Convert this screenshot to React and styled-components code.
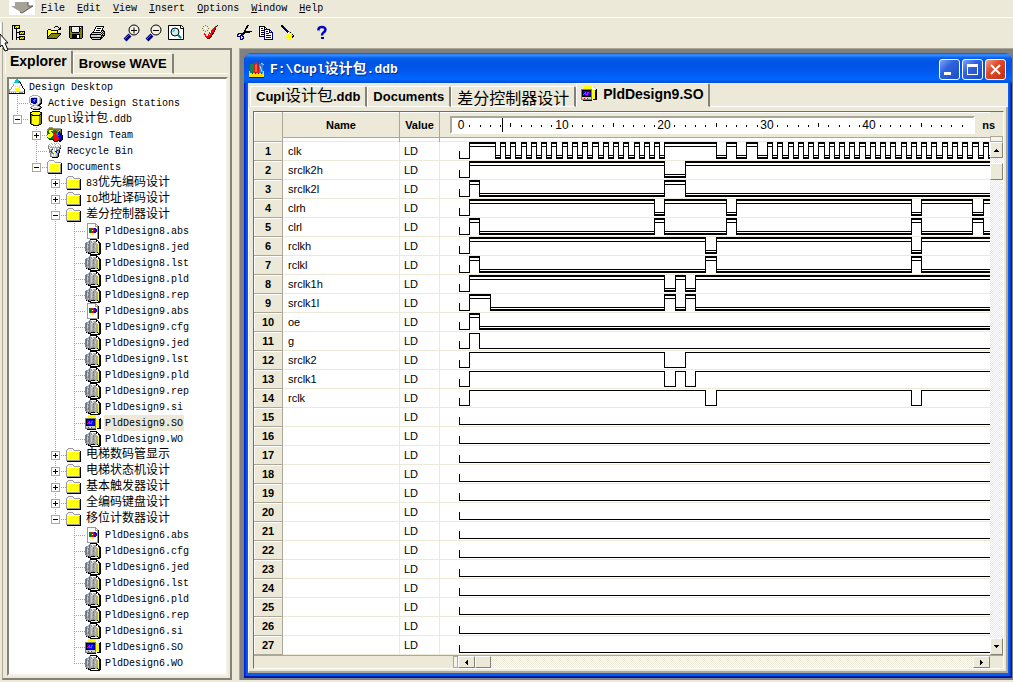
import React, { useState } from "react";
import styled, { createGlobalStyle, css } from "styled-components";

const GlobalStyle = createGlobalStyle`
  * {
    box-sizing: border-box;
  }
  body {
    margin: 0;
    background: #ece9d8;
    color: #000;
    font-family: "Liberation Mono", "Noto Sans CJK SC", monospace;
    font-size: 10px;
  }
  button {
    padding: 0;
    border: none;
    background: none;
    color: inherit;
    font: inherit;
  }
`;

/* ---------- icons ---------- */

const COLORS = {
  K: "#000000",
  W: "#ffffff",
  A: "#999999",
  G: "#a8a8a8",
  g: "#7c7c7c",
  L: "#cccccc",
  B: "#4d86c4",
  b: "#0000ff",
  D: "#000080",
  N: "#5f9e36",
  T: "#2f7f86",
  Y: "#ffff00",
  y: "#808000",
  R: "#ff0000",
  r: "#800000",
  M: "#ff00ff",
  C: "#00cccc",
  E: "#008000",
};

const Pixels = ({ rows }) => (
  <svg
    width={rows[0].length}
    height={rows.length}
    shapeRendering="crispEdges"
    aria-hidden="true"
  >
    {rows.map((row, y) =>
      row
        .split("")
        .map((c, x) =>
          c === "." ? null : (
            <rect key={x + "-" + y} x={x} y={y} width="1" height="1" fill={COLORS[c]} />
          )
        )
    )}
  </svg>
);

const ICONS = {
  folder: [
    "................",
    "..AAAAA.........",
    ".AYWYWYA........",
    "AYWYWYWYAAAAAA..",
    "AWWWWWWWWWWWWWK.",
    "AWYWYWYWYWYWYAK.",
    "AYWYWYWYWYWYWAK.",
    "AWYWYWYWYWYWYAK.",
    "AYWYWYWYWYWYWAK.",
    "AWYWYWYWYWYWYAK.",
    "AYWYWYWYWYWYWAK.",
    "AWYWYWYWYWYWYAK.",
    "AYWYWYWYWYWYWAK.",
    "AAAAAAAAAAAAAAK.",
    ".KKKKKKKKKKKKKK.",
    "................",
  ],
  openFolder: [
    "................",
    "..AAAAA.........",
    ".AWWWWWA........",
    "AWWWWWWWAAAAAA..",
    "AWWWWWWWWWWWWWK.",
    "AWWYWYWYWYWYWAK.",
    "AWYWWWYWWWYWWAK.",
    "AWWYWYWYWYWYWAK.",
    "AWYWWWYWWWYWWAK.",
    "AWWYWYWYWYWYWAK.",
    "AWYWWWYWWWYWWAK.",
    "AWWYWYWYWYWYWAK.",
    "AYWYWYWYWYWYWAK.",
    "AAAAAAAAAAAAAAK.",
    ".KKKKKKKKKKKKKK.",
    "................",
  ],
  doc: [
    ".....KKKKKKK....",
    "....GGWWWWWKK...",
    "...GTGGWGGGKWK..",
    ".BGGTGGLLGGWWKK.",
    "BgGLNGLLgGGGWYKK",
    "BgGgNGLGgGGGGYKK",
    "BgLgNGLGGGLGGYKK",
    "BBLGNGLGgGLGGYKK",
    "BgLgNGLGgGLGGYKK",
    "BgGgNGLGGGGGGYKK",
    "BBGgNGLGgGLGGYKK",
    "BgGGNGGGGGGGGYKK",
    ".BGGNGGGgGGGGYKK",
    ".KGKNgKKKKGGKYKK",
    "...KKKWWWWWWWKKK",
    ".....KKKKKKKKKK.",
  ],
  abs: [
    "..AAAAAAAAA.....",
    "..AWWWWWWWAA....",
    "..AWWWWWWWAWA...",
    "..AWWWWWWWAAAK..",
    "..AWWWWWWWWWAK..",
    "..AWEERRRbbWAK..",
    "..AWEEERRbbbAK..",
    "..AWEERWRRbbAK..",
    "..AWEEERRbbbAK..",
    "..AWEERRRbbWAK..",
    "..AWWYYYYYWWAK..",
    "..AWWWYYYWWWAK..",
    "..AWWWWWWWWWAK..",
    "..AWWWWWWWWWAK..",
    "..AWWWWWWWWWAK..",
    "..AAAAAAAAAAAK..",
  ],
  wave: [
    "...YYYYYYYYWL...",
    "...YYYYYYYYWWL..",
    "...YYYYYYYYWWWL.",
    "gggggggggggWWWWK",
    "gKKKKKKKKKgYYYKK",
    "gKbbbbbbbDgYYYKK",
    "gKbbMbMMbDgYYYKK",
    "gKbMMbMbbDgYYYKK",
    "gKMbMMMbbDgYYYKK",
    "gKbbbbbbbDgYYYKK",
    "gKKKKKKKKKgYYYKK",
    "gLLLLLLLLLgYYYKK",
    "gLLRLWRLLLgYYYKK",
    "ggggggggggg.KKKK",
    "..KKKKKKKKK.....",
    "................",
  ],
  desktop: [
    ".......CC.......",
    "......CCCC......",
    "......CCCCK.....",
    ".....CCCCTTK....",
    ".....WWWWWWK....",
    "....AWWWWWWWK...",
    "....AWWWWWWLK...",
    "...AWWLWLWLWWK..",
    "..AWWWWWWWLWWK..",
    "..AWWWYYYYWWWWK.",
    "AAWWWWYYYYYWWWWK",
    "AWWWWWWYYYYWWWWK",
    "ALLLLLLLLLLLLLLK",
    "AWAWAWAWWWAAAAWK",
    "KKKKKKKKKKKKKKKK",
    "................",
  ],
  station: [
    "....GGGGGG......",
    "..GGWWWWWWGG....",
    ".GWWLLLLLWWLg...",
    ".GWDDDDDDLWLgg..",
    ".GLDbbBBDLWLgK..",
    ".GLDbBBbDLWLgK..",
    ".GLDbbBbDLWLgK..",
    ".GWDDbbDDLWLgK..",
    "..GWLDDDLLWgKK..",
    "..GGWLLLLLgKK...",
    "....GgLLLgKK....",
    "...gLLWWWLLgK...",
    "..gLWWLLLWWLgK..",
    "...KgLLLLLgKK...",
    ".....KKKKKKK....",
    "................",
  ],
  db: [
    "....KKKKKKKK....",
    "..KKYYYYYYYYKK..",
    "..KYYYYYYYYYyK..",
    "..KKyYYYYYYyKK..",
    "..KyKKKKKKKKyK..",
    "..KyYWYYYYYyyK..",
    "..KyYWYYYYYyyK..",
    "..KyYWYYYYYyyK..",
    "..KyYWYYYYYyyK..",
    "..KyYWYYYYYyyK..",
    "..KyYWYYYYYyyK..",
    "..KyYWYYYYYyyK..",
    "..KyYWYYYYYyyK..",
    "...KKyYYYYyKK...",
    ".....KKKKKK.....",
    "................",
  ],
  team: [
    "..AAAA..........",
    ".AyyyyAAAAAAAA..",
    "AyyyyyyyyyyyyyK.",
    "AyLYYLyEEyyyLyK.",
    "EEYYEyRRREyLbyK.",
    "EEYYYERRREybbyK.",
    "yEEYYYERREybbbK.",
    "EYYYYYyRRyybbDK.",
    "YYYYYYEERRRybbbK",
    "YYYYYEERRRRbbbbK",
    "EYYYEERRRRRRbbbK",
    ".EEEEERRRRRRbbDK",
    "..KKKKrRRRRrbDDK",
    "......KRRRrKKDD.",
    ".......KKKK.KK..",
    "................",
  ],
  bin: [
    "....GWWG.GWG....",
    "..GWWGWWGWWWG...",
    ".GWLWWWLWWLWWg..",
    ".gGWGWLWGWWGWg..",
    ".gWGGGGGGGGGgg..",
    ".gLWWGWLWGLWgK..",
    "..gLBbWLWBLgg...",
    "..gLRWWLWBbgK...",
    "..gRRLWLbbLgK...",
    "..gLRBWYYbLgK...",
    "...gLBBYYLgK....",
    "...gLWLWLLgK....",
    "...gLWLWLLgK....",
    "...ggLLLLggK....",
    ".....KKKKKK.....",
    "................",
  ],
  hierarchy: [
    "KKKKKKKK........",
    "K.KyYYYK........",
    "K.KYyYyK........",
    "K.KKKKKK........",
    "K...K...........",
    "K...K...........",
    "K...K..KKKKKK...",
    "K...KKKKyYyYK...",
    "K...K..KYyYyK...",
    "K...K..KKKKKK...",
    "K...K...........",
    "K...K..KKKKKK...",
    "K...KKKKyYyYK...",
    "K...K..KYyYyK...",
    "K...K..KKKKKK...",
    "................",
  ],
  open: [
    "................",
    ".........KKK....",
    "........K...K.K.",
    ".............KK.",
    "..KKK.......KKK.",
    ".KYWYKKKKKKK....",
    ".KWYWYWYWYWK....",
    ".KYWYWYWYWYK....",
    ".KWYWKKKKKKKKKK.",
    ".KYWKyyyyyyyyyK.",
    ".KWKyyyyyyyyyK..",
    ".KKyyyyyyyyyK...",
    ".KyyyyyyyyyK....",
    ".KKKKKKKKKK.....",
    "................",
    "................",
  ],
  save: [
    "................",
    ".KKKKKKKKKKKKKK.",
    ".KyKYWYWYWYKWyK.",
    ".KyKWYWYWYWKKyK.",
    ".KyKYWYWYWYKyyK.",
    ".KyKWYWYWYWKyyK.",
    ".KyKYWYWYWYKyyK.",
    ".KyyKKKKKKKyyyK.",
    ".KyyyyyyyyyyyyK.",
    ".KyyKKKKKKKKyyK.",
    ".KyyKKKKKWWKyyK.",
    ".KyyKKKKKWWKyyK.",
    ".KyyKKKKKWWKyyK.",
    "..KKKKKKKKKKKK..",
    "................",
    "................",
  ],
  print: [
    "................",
    "......KKKKKKKK..",
    ".....KWWWWWWWK..",
    ".....KWKKKKWK...",
    "....KWWWWWWWK...",
    "....KWKKKKWKKK..",
    "...KWWWWWWWKLKK.",
    "..KKKKKKKKKLKLK.",
    ".KLLLLLLLLLKLKK.",
    "KKKKKKKKKKKLKLK.",
    "KLLLLLLYYYLKKKK.",
    "KLLLLLLLLLLKLK..",
    "KKKKKKKKKKKKK...",
    ".KLLLLLLLLKK....",
    "..KKKKKKKKK.....",
    "................",
  ],
  copy: [
    "................",
    ".KKKKKK.........",
    ".KWWWWKK........",
    ".KWKKWKWK.......",
    ".KWWWWDDDDDD....",
    ".KWKKKDWWWWDD...",
    ".KWWWWDWDDWDWD..",
    ".KWKKKDWWWWDDDD.",
    ".KWWWWDWDDDWWWD.",
    ".KWKKKDWWWWWWWD.",
    ".KWWWWDWDDDDDWD.",
    ".KKKKKDWWWWWWWD.",
    "......DWDDDDDWD.",
    "......DWWWWWWWD.",
    "......DDDDDDDDD.",
    "................",
  ],
  cut: [
    "...........KK...",
    "..........KK....",
    "..........KK....",
    ".........KK.....",
    ".........K......",
    "........KK......",
    "........KKKKKKKK",
    ".......KKKKKKK..",
    "..DDDDKKK.......",
    ".DD..DDD........",
    ".D..DDD.........",
    ".DDDD.DD........",
    "....D..D........",
    "....D.DD........",
    "....DDD.........",
    "................",
  ],
  brush: [
    ".KK.............",
    ".KKK............",
    "..KDD...........",
    "...KDD..........",
    "....KDD.........",
    ".....KDD........",
    "......KDDL......",
    ".......KWLK.....",
    "........WYWL....",
    ".......YYWYWK...",
    ".......YWYWYLK..",
    "......YWYWYYKK..",
    "......YYWY..K...",
    ".......YYYY.....",
    "......YY.YY.....",
    "................",
  ],
  wand: [
    "...y...........K",
    ".y.Y.y.......RK.",
    "..YWY.......RR..",
    "yYWWWYy....RRr..",
    "..YWY.....RRRK..",
    ".y.Y.y...RRRr...",
    "...y....WRRRK...",
    ".......RWRRr....",
    "..R....RRRrK....",
    "..RR..RWRRK.....",
    "...R..RRRr......",
    "...RRRRRrK......",
    "....RRRRK.......",
    ".....rrK........",
    "................",
    "................",
  ],
};

const Magnifier = ({ plus }) => (
  <svg width="18" height="18" viewBox="0 0 18 18" aria-hidden="true">
    <path d="M2 16 L7 11" stroke="#000080" strokeWidth="4" />
    <path d="M2 15 L7 10" stroke="#4a6ce0" strokeWidth="1" />
    <circle cx="11" cy="6" r="5" fill="#f3f1e6" stroke="#000" strokeWidth="1" />
    <path d="M8 6.5h6" stroke="#000" />
    {plus && <path d="M11 3.5v6" stroke="#000" />}
  </svg>
);

const FitIcon = () => (
  <svg width="18" height="18" viewBox="0 0 18 18" aria-hidden="true">
    <path d="M1.5 1.5h13l2 2v12h-15z" fill="#fff" stroke="#000" />
    <path d="M13.5 1.5v3h3" fill="none" stroke="#000" />
    <circle cx="8" cy="8" r="4" fill="#cdeeee" stroke="#000" />
    <path d="M6 8a2 2 0 0 1 2-2" stroke="#00b0b0" fill="none" />
    <path d="M11 11l3 3" stroke="#008080" strokeWidth="2" />
  </svg>
);

const HelpIcon = () => (
  <svg width="12" height="16" viewBox="0 0 12 16" aria-hidden="true">
    <path
      d="M2.5 5.5V4Q3 2 6 2t3.5 2.5Q9.5 6 7.5 7.5Q6 8.5 6 10.5"
      fill="none"
      stroke="#0000c8"
      strokeWidth="2.5"
    />
    <rect x="5" y="12" width="3" height="2" fill="#0000c8" />
  </svg>
);

const AppArrow = () => (
  <svg width="26" height="15" viewBox="0 0 26 15" aria-hidden="true">
    <rect width="26" height="15" fill="#fff" />
    <path d="M6 2h13v4h5l-11 7L2 6h4z" fill="#a5a298" />
    <path d="M19 2v4h5l-11 7-2-1" fill="none" stroke="#5c5a52" />
  </svg>
);

const BooksIcon = () => (
  <svg width="16" height="16" viewBox="0 0 16 16" aria-hidden="true">
    <path d="M1 2h4v9H1z" fill="#0c8a50" />
    <path d="M5 1l4-1 2 11H5z" fill="#e01818" />
    <path d="M6 3l2-1v8H6z" fill="#ff6040" />
    <path d="M10 2l4-1v10h-4z" fill="#2c7fd8" />
    <path d="M11 4l2 6M12 1l3 2" stroke="#a9e4ff" />
    <path d="M0 9h1v2h13V9h1v6H0z" fill="#ffe000" />
    <path d="M3 11h1v1H3zM6 11h1v1H6zM9 11h1v1H9zM12 11h1v1h-1zM0 15h15v1H0z" fill="#302000" />
  </svg>
);

const Cursor = styled.svg`
  position: absolute;
  left: 0;
  top: 34px;
`;

/* ---------- text with Chinese runs a size larger than the Latin ---------- */

const Han = styled.span`
  font-family: "Noto Sans CJK SC", sans-serif;
  font-size: ${(p) => p.$size}px;
  font-weight: ${(p) => (p.$bold ? 700 : 400)};
  line-height: 0;
`;

const Mixed = ({ text, size = 12, bold = false }) =>
  text.split(/([\u4e00-\u9fff]+)/).map((part, i) =>
    i % 2 ? (
      <Han key={i} $size={size} $bold={bold}>
        {part}
      </Han>
    ) : (
      part
    )
  );

/* ---------- menu and toolbar ---------- */

const Page = styled.div`
  position: relative;
  display: flex;
  flex-direction: column;
  min-height: 100vh;
  overflow: hidden;
`;

const MenuBar = styled.nav`
  display: flex;
  align-items: flex-start;
  gap: 12px;
  height: 18px;
  padding-left: 9px;
  border-bottom: 1px solid #fff;
`;

const MenuLogo = styled.span`
  display: flex;
  margin-right: -6px;
`;

const MenuItem = styled.button`
  height: 17px;
  line-height: 18px;
`;

const ToolBar = styled.div`
  display: flex;
  align-items: center;
  gap: 12px;
  height: 30px;
`;

const Grip = styled.span`
  width: 3px;
  height: 22px;
  margin: 0 -6px 0 0;
  border-right: 1px solid #aca899;
  border-left: 1px solid #fff;
`;

const ToolGroup = styled.div`
  display: flex;
`;

const ToolButton = styled.button`
  display: flex;
  align-items: center;
  justify-content: center;
  width: 22px;
  height: 22px;
`;

const tools = [
  [["Project tree", <Pixels rows={ICONS.hierarchy} />]],
  [
    ["Open", <Pixels rows={ICONS.open} />],
    ["Save", <Pixels rows={ICONS.save} />],
    ["Print", <Pixels rows={ICONS.print} />],
  ],
  [
    ["Zoom in", <Magnifier plus />],
    ["Zoom out", <Magnifier />],
    ["Fit page", <FitIcon />],
  ],
  [["Wizard", <Pixels rows={ICONS.wand} />]],
  [
    ["Cut", <Pixels rows={ICONS.cut} />],
    ["Copy", <Pixels rows={ICONS.copy} />],
    ["Paste", <Pixels rows={ICONS.brush} />],
  ],
  [["Help", <HelpIcon />]],
];

const menus = ["File", "Edit", "View", "Insert", "Options", "Window", "Help"];

/* ---------- tabs ---------- */

const TabRow = styled.div`
  display: flex;
  align-items: flex-end;
  height: 24px;
  font-family: "Liberation Sans", "Noto Sans CJK SC", sans-serif;
`;

const TabFill = styled.span`
  flex: 1;
  border-bottom: 1px solid #fff;
`;

const Tab = styled.button`
  display: flex;
  align-items: center;
  justify-content: center;
  gap: 6px;
  height: 21px;
  padding: 0 5px;
  border-top: 1px solid #fff;
  border-left: 1px solid #fff;
  border-right: 2px solid #848278;
  border-bottom: 1px solid #fff;
  border-radius: 2px 2px 0 0;
  font-size: 13px;
  font-weight: 700;
  line-height: 18px;
  white-space: nowrap;

  ${(p) =>
    p.$active &&
    css`
      height: 24px;
      padding: 0 4px 3px;
      border-bottom-color: #ece9d8;
      font-size: 14px;
    `}
`;

/* ---------- explorer ---------- */

const Main = styled.main`
  display: flex;
  flex: 1;
  padding-bottom: 2px;
`;

const Side = styled.aside`
  flex: 0 0 230px;
  display: flex;
  flex-direction: column;
  margin: 0 7px 0 2px;
  padding: 0 2px 2px 2px;
  border: 2px solid #848278;
  border-left: 1px solid #aca899;
`;

const TreeBox = styled.div`
  flex: 1;
  margin: 3px 0 0 2px;
  border: 2px solid;
  border-color: #848278 #f4f2e8 #f4f2e8 #848278;
  background: #fff;
`;

const Tree = styled.ul`
  margin: 0;
  padding: 0;
  list-style: none;
`;

const Row = styled.li`
  display: flex;
  height: 16px;
`;

const vertical = (height) =>
  `repeating-linear-gradient(#a0a0a0 0 1px, transparent 1px 2px) 8px 0 / 1px ${height} no-repeat`;
const horizontal =
  "repeating-linear-gradient(90deg, #a0a0a0 0 1px, transparent 1px 2px) 8px 8px / 11px 1px no-repeat";

const guides = {
  none: "none",
  pass: vertical("100%"),
  tee: `${vertical("100%")}, ${horizontal}`,
  end: `${vertical("9px")}, ${horizontal}`,
};

const Guide = styled.span`
  flex: 0 0 19px;
  padding: 4px;
  background: ${(p) => guides[p.$kind]};
`;

const Expander = styled.button`
  display: block;
  width: 9px;
  height: 9px;
  border: 1px solid #aca899;
  background: linear-gradient(#000, #000) 1px 3px / 5px 1px no-repeat,
    ${(p) => (p.$open ? "" : "linear-gradient(#000, #000) 3px 1px / 1px 5px no-repeat,")}
    linear-gradient(#fff, #fff);
`;

const ItemIcon = styled.span`
  flex: 0 0 19px;
  height: 16px;
  line-height: 0;
`;

const ItemLabel = styled.span`
  height: 16px;
  padding: 0 1px;
  line-height: 18px;
  white-space: nowrap;
  background: ${(p) => (p.$selected ? "#ece9d8" : "none")};
`;

const files = (name, exts) =>
  exts.map((ext) => ({
    name: `${name}.${ext}`,
    icon: ext === "abs" ? "abs" : ext === "SO" ? "wave" : "doc",
  }));

const closedFolder = (name) => ({ name, icon: "folder", closed: true, children: [] });

const designTree = {
  name: "Design Desktop",
  icon: "desktop",
  children: [
    { name: "Active Design Stations", icon: "station" },
    {
      name: "Cupl设计包.ddb",
      icon: "db",
      children: [
        { name: "Design Team", icon: "team", closed: true, children: [] },
        { name: "Recycle Bin", icon: "bin" },
        {
          name: "Documents",
          icon: "openFolder",
          children: [
            closedFolder("83优先编码设计"),
            closedFolder("IO地址译码设计"),
            {
              name: "差分控制器设计",
              icon: "folder",
              children: [
                ...files("PldDesign8", ["abs", "jed", "lst", "pld", "rep"]),
                ...files("PldDesign9", ["abs", "cfg", "jed", "lst", "pld", "rep", "si", "SO", "WO"]),
              ],
            },
            closedFolder("电梯数码管显示"),
            closedFolder("电梯状态机设计"),
            closedFolder("基本触发器设计"),
            closedFolder("全编码键盘设计"),
            {
              name: "移位计数器设计",
              icon: "folder",
              children: files("PldDesign6", ["abs", "cfg", "jed", "lst", "pld", "rep", "si", "SO", "WO"]),
            },
          ],
        },
      ],
    },
  ],
};

const TreeNode = ({ node, trail = [], last = true, root = false }) => {
  const [open, setOpen] = useState(!node.closed);
  const below = root ? [] : [...trail, last ? "none" : "pass"];

  return (
    <>
      <Row>
        {trail.map((kind, i) => (
          <Guide key={i} $kind={kind} />
        ))}
        {!root && (
          <Guide $kind={last ? "end" : "tee"}>
            {node.children && (
              <Expander $open={open} aria-label={node.name} onClick={() => setOpen(!open)} />
            )}
          </Guide>
        )}
        <ItemIcon>
          <Pixels rows={ICONS[node.icon]} />
        </ItemIcon>
        <ItemLabel $selected={node.name === "PldDesign9.SO"}>
          <Mixed text={node.name} />
        </ItemLabel>
      </Row>
      {open &&
        (node.children || []).map((child, i) => (
          <TreeNode
            key={child.name}
            node={child}
            trail={below}
            last={i === node.children.length - 1}
          />
        ))}
    </>
  );
};

/* ---------- document window ---------- */

const Workspace = styled.section`
  flex: 1;
  min-width: 0;
  padding: 4px 1px 2px 4px;
  border-top: 1px solid #aca899;
  border-left: 1px solid #aca899;
  background: #808080;
`;

const Window = styled.div`
  display: flex;
  flex-direction: column;
  height: 100%;
  padding: 0 4px 5px;
  border-radius: 8px 8px 0 0;
  background: linear-gradient(90deg, #0019cf 0, #0a5cf0 3px, #0a5cf0 calc(100% - 3px), #00138c 100%);
  box-shadow: inset 0 -2px #0019a8;
`;

const TitleBar = styled.header`
  display: flex;
  align-items: center;
  gap: 2px;
  height: 30px;
  margin: 0 -4px;
  padding: 3px 6px 0 5px;
  border-radius: 8px 8px 0 0;
  background: linear-gradient(
    #0a4fd8 0,
    #3c92ff 2px,
    #0560ee 5px,
    #0054e3 9px,
    #0058ee 18px,
    #0066ff 26px,
    #0050d8 30px
  );
`;

const WindowTitle = styled.h1`
  flex: 1;
  margin: 0 0 0 3px;
  color: #fff;
  font-size: 13px;
  line-height: 20px;
  text-shadow: 1px 1px #0a2a80;
`;

const TitleButton = styled.button`
  display: flex;
  width: 21px;
  height: 21px;
  border: 1px solid #fff;
  border-radius: 3px;
  background: ${(p) =>
    p.$close
      ? "linear-gradient(135deg, #f0a088, #e0492a 40%, #c03010)"
      : "linear-gradient(135deg, #7fa4f4, #2f62dc 40%, #1c4cc4)"};
`;

const Client = styled.div`
  flex: 1;
  display: flex;
  flex-direction: column;
  padding-left: 2px;
  background: #ece9d8;
`;

const Pane = styled.div`
  flex: 1;
  margin-left: -2px;
  padding: 4px 2px 2px 4px;
  border-left: 1px solid #fff;
  border-right: 2px solid #aca899;
  border-bottom: 2px solid #aca899;
`;

const GridBox = styled.div`
  border: 1px solid;
  border-color: #716f64 #fff #fff #716f64;
`;

const GridBody = styled.div`
  display: flex;
`;

const Grid = styled.table`
  flex: 1;
  width: 100%;
  min-width: 0;
  table-layout: fixed;
  border-spacing: 0;
  font-family: "Liberation Sans", sans-serif;
  font-size: 11px;
`;

const HeadCell = styled.th`
  width: ${(p) => p.$width};
  height: 30px;
  padding: 0 0 4px;
  border-right: 1px solid #aca899;
  background: linear-gradient(
    #fff 0 1px,
    #ece9d8 1px 25px,
    #aca899 25px 26px,
    #fff 26px 29px,
    #ece9d8 29px
  );
  font-size: 11px;
  line-height: 25px;

  &:last-child {
    border-right: none;
  }
`;

const CornerCell = styled(HeadCell)`
  border-bottom: 1px solid #aca899;
  background: #ece9d8;
  box-shadow: inset 1px 1px #fff;
`;

const NumberCell = styled.th`
  height: 19px;
  padding: 0;
  border-right: 1px solid #aca899;
  border-bottom: 1px solid #aca899;
  background: #ece9d8;
  box-shadow: inset 1px 1px #fff;
  line-height: 18px;
`;

const Cell = styled.td`
  height: 19px;
  padding: 0 0 0 ${(p) => p.$pad || 0}px;
  border-right: 1px solid #ece9d8;
  border-bottom: 1px solid #ece9d8;
  background: #fff;
  line-height: 18px;

  &:last-child {
    border-right: none;
  }
`;

const RulerRow = styled.div`
  display: flex;
  align-items: center;
  height: 25px;
  padding-left: 10px;
`;

const RulerBox = styled.div`
  flex: 1;
  height: 18px;
  border: 2px solid;
  border-color: #aca899 #fff #fff #aca899;
  background: #fff;
  line-height: 0;
`;

/* reaches over the scroll bar column */
const Unit = styled.span`
  position: relative;
  z-index: 1;
  width: 15px;
  margin: 0 -5px 0 5px;
  text-align: right;
`;

const WaveSvg = styled.svg`
  display: block;
  width: 100%;
  height: ${(p) => p.$height}px;
`;

const NS = 10.26;

const Ruler = () => (
  <WaveSvg $height={14} shapeRendering="crispEdges">
    {Array.from({ length: 50 }, (_, n) => {
      const x = Math.round(7 + n * NS);
      if (n % 10 === 0) {
        return (
          <text key={n} x={n ? x : x + 2} y="11" textAnchor="middle" fontSize="12" fontWeight="400">
            {n}
          </text>
        );
      }
      return n % 5 === 0 ? (
        <rect key={n} x={x} y="5" width="1" height="4" />
      ) : (
        <rect key={n} x={x} y="7" width="1" height="2" />
      );
    })}
    <rect x="50" y="0" width="1" height="14" />
  </WaveSvg>
);

// edges are counted in half nanoseconds, the first one always rises
const toX = (t) => Math.round(29.2 + t * 5.135);
const END = 2400;

const Wave = ({ edges, bus }) => {
  const shapes = [<path key="stub" d={edges ? "M19 9h1v7h10v1H19z" : `M19 9h1v7h${END}v1H19z`} />];

  (edges || []).forEach((t, i) => {
    const high = i % 2 === 0;
    const x = toX(t);
    const w = (i + 1 < edges.length ? toX(edges[i + 1]) : END) - x + 1;
    const top = bus ? 0 : 1;
    shapes.push(<rect key={"e" + i} x={x} y={top} width="1" height={17 - top} />);
    if (bus) {
      shapes.push(<rect key={"a" + i} x={x} y={high ? 0 : 15} width={w} height="2" />);
      shapes.push(<rect key={"b" + i} x={x} y={high ? 4 : 13} width={w} height="1" />);
    } else {
      shapes.push(<rect key={"a" + i} x={x} y={high ? 1 : 16} width={w} height="1" />);
    }
  });

  return (
    <WaveSvg $height={18} shapeRendering="crispEdges">
      {shapes}
    </WaveSvg>
  );
};

const range = (from, to) => Array.from({ length: to - from + 1 }, (_, i) => from + i);

const signals = [
  { name: "clk", bus: true, edges: [0, ...range(5, 38), 48, 50, 52, 54, 56, ...range(58, 101)] },
  { name: "srclk2h", bus: true, edges: [0, 38, 42] },
  { name: "srclk2l", bus: true, edges: [0, 2, 38, 42] },
  { name: "clrh", bus: true, edges: [0, 36, 38, 50, 52, 86, 88, 98, 100] },
  { name: "clrl", bus: true, edges: [0, 2, 36, 38, 50, 52, 86, 88, 98, 100] },
  { name: "rclkh", bus: true, edges: [0, 46, 48, 86, 88] },
  { name: "rclkl", bus: true, edges: [0, 2, 46, 48, 86, 88] },
  { name: "srclk1h", bus: true, edges: [0, 38, 40, 42, 44] },
  { name: "srclk1l", bus: true, edges: [0, 4, 38, 40, 42, 44] },
  { name: "oe", bus: true, edges: [0, 2] },
  { name: "g", edges: [0, 2] },
  { name: "srclk2", edges: [0, 38, 42] },
  { name: "srclk1", edges: [0, 38, 40, 42, 44] },
  { name: "rclk", edges: [0, 46, 48, 86, 88] },
  ...range(15, 27).map(() => ({ name: "" })),
];

/* ---------- scroll bars ---------- */

const Track = styled.span`
  flex: ${(p) => p.$grow || "1"};
  background: repeating-conic-gradient(#ece9d8 0 25%, #fff 0 50%) 0 0 / 2px 2px;
`;

const VScroll = styled.div`
  flex: 0 0 13px;
  display: flex;
  flex-direction: column;
  padding-top: 24px;
  background: #ece9d8;
`;

const HScroll = styled.div`
  display: flex;
  height: 13px;
  border-top: 1px solid #aca899;
  background: #ece9d8;
`;

const Raised = styled.button`
  display: flex;
  align-items: center;
  justify-content: center;
  flex: 0 0 ${(p) => p.$size}px;
  border: 1px solid;
  border-color: #fff #848278 #848278 #fff;
  background: #ece9d8;
`;

const SplitHandle = styled.span`
  flex: 0 0 ${(p) => p.$size}px;
  border: 1px solid #aca899;
  background: #f6f4ea;
`;

const HSpace = styled.span`
  flex: 0 0 ${(p) => p.$size}px;
`;

const Arrow = ({ d }) => (
  <svg width="7" height="7" viewBox="0 0 7 7" shapeRendering="crispEdges" aria-hidden="true">
    <path d={d} />
  </svg>
);

const WaveGrid = () => (
  <GridBox>
    <GridBody>
      <Grid>
        <thead>
          <tr>
            <CornerCell $width="29px" />
            <HeadCell $width="117px">Name</HeadCell>
            <HeadCell $width="40px">Value</HeadCell>
            <HeadCell $width="auto">
              <RulerRow>
                <RulerBox>
                  <Ruler />
                </RulerBox>
                <Unit>ns</Unit>
              </RulerRow>
            </HeadCell>
          </tr>
        </thead>
        <tbody>
          {signals.map((signal, i) => (
            <tr key={i}>
              <NumberCell scope="row">{i + 1}</NumberCell>
              <Cell $pad={5}>{signal.name}</Cell>
              <Cell $pad={4}>LD</Cell>
              <Cell>
                <Wave edges={signal.edges} bus={signal.bus} />
              </Cell>
            </tr>
          ))}
        </tbody>
      </Grid>
      <VScroll>
        <SplitHandle $size={6} />
        <Raised $size={16} aria-label="Scroll up">
          <Arrow d="M3 2h1v1h1v1h1v1H1V4h1V3h1z" />
        </Raised>
        <Track $grow="0 0 5px" />
        <Raised $size={17} aria-label="Vertical position" />
        <Track />
        <Raised $size={17} aria-label="Scroll down">
          <Arrow d="M1 2h5v1H5v1H4v1H3V4H2V3H1z" />
        </Raised>
      </VScroll>
    </GridBody>
    <HScroll>
      <HSpace $size={199} />
      <SplitHandle $size={5} />
      <Raised $size={17} aria-label="Scroll left">
        <Arrow d="M2 3h1V2h1V1h1v5H4V5H3V4H2z" />
      </Raised>
      <Raised $size={16} aria-label="Horizontal position" />
      <Track />
      <Raised $size={17} aria-label="Scroll right">
        <Arrow d="M2 1h1v1h1v1h1v1H4v1H3v1H2z" />
      </Raised>
      <HSpace $size={13} />
    </HScroll>
  </GridBox>
);

const App = () => {
  return (
    <Page>
      <GlobalStyle />
      <MenuBar>
        <MenuLogo>
          <AppArrow />
        </MenuLogo>
        {menus.map((menu) => (
          <MenuItem key={menu}>
            <u>{menu[0]}</u>
            {menu.slice(1)}
          </MenuItem>
        ))}
      </MenuBar>
      <ToolBar>
        <Grip />
        {tools.map((group, i) => (
          <ToolGroup key={i}>
            {group.map(([label, icon]) => (
              <ToolButton key={label} aria-label={label}>
                {icon}
              </ToolButton>
            ))}
          </ToolGroup>
        ))}
      </ToolBar>
      <Main>
        <Side>
          <TabRow>
            <Tab $active>Explorer</Tab>
            <Tab>Browse WAVE</Tab>
            <TabFill />
          </TabRow>
          <TreeBox>
            <Tree>
              <TreeNode node={designTree} root />
            </Tree>
          </TreeBox>
        </Side>
        <Workspace>
          <Window>
            <TitleBar>
              <BooksIcon />
              <WindowTitle>
                <Mixed text="F:\Cupl设计包.ddb" size={14} bold />
              </WindowTitle>
              <TitleButton aria-label="Minimize">
                <svg width="19" height="19" aria-hidden="true">
                  <rect x="4" y="12" width="7" height="3" fill="#fff" />
                </svg>
              </TitleButton>
              <TitleButton aria-label="Maximize">
                <svg width="19" height="19" aria-hidden="true">
                  <path d="M4 4h11v11H4zM5 7v7h9V7z" fill="#fff" fillRule="evenodd" />
                </svg>
              </TitleButton>
              <TitleButton $close aria-label="Close">
                <svg width="19" height="19" aria-hidden="true">
                  <path d="M5 5l9 9M14 5l-9 9" stroke="#fff" strokeWidth="2" />
                </svg>
              </TitleButton>
            </TitleBar>
            <Client>
              <TabRow>
                <Tab>
                  <span>
                    Cupl<Han $size={16}>设计包</Han>.ddb
                  </span>
                </Tab>
                <Tab>Documents</Tab>
                <Tab>
                  <Han $size={16}>差分控制器设计</Han>
                </Tab>
                <Tab $active>
                  <Pixels rows={ICONS.wave} />
                  PldDesign9.SO
                </Tab>
                <TabFill />
              </TabRow>
              <Pane>
                <WaveGrid />
              </Pane>
            </Client>
          </Window>
        </Workspace>
      </Main>
      <Cursor width="10" height="19" viewBox="0 0 10 19" aria-hidden="true">
        <path d="M0 0L8 9H5l3 7-3 1-3-6-2 2z" fill="#fff" stroke="#000" />
      </Cursor>
    </Page>
  );
};

export default App;
